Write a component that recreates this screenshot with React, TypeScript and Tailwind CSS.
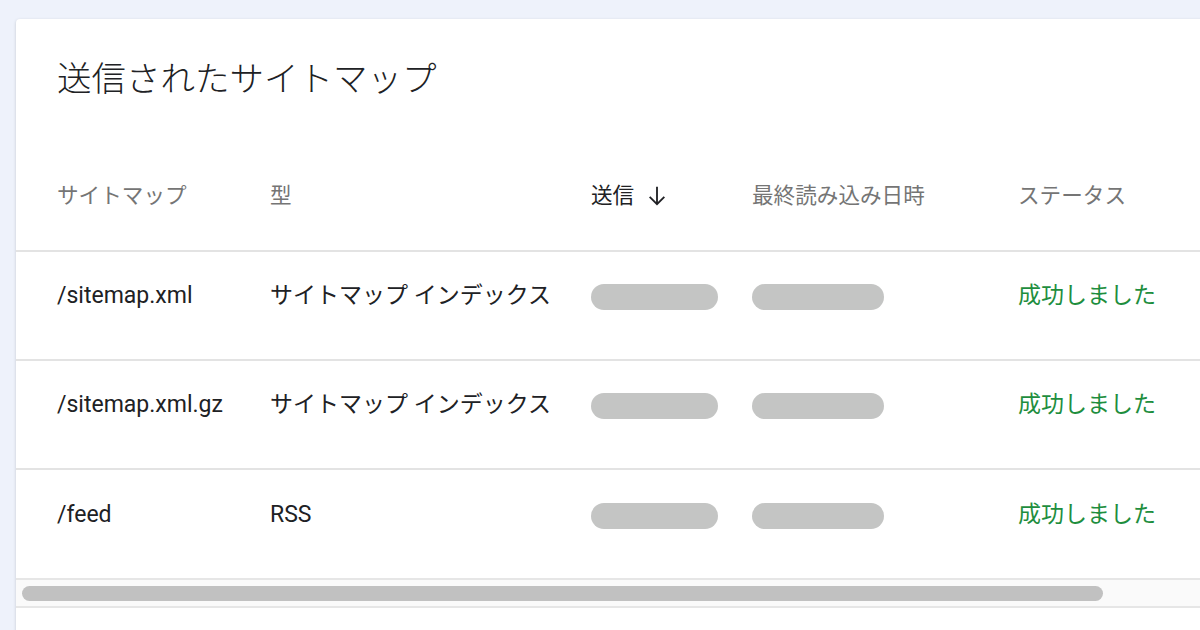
import React from 'react';

const rows = [
  { path: '/sitemap.xml', type: 'サイトマップ インデックス' },
  { path: '/sitemap.xml.gz', type: 'サイトマップ インデックス' },
  { path: '/feed', type: 'RSS' },
];

const font = { fontFamily: 'Roboto, "Noto Sans CJK JP", sans-serif' };

const App: React.FC = () => {
  return (
    <div className="h-[630px] w-[1200px] overflow-hidden bg-[#eef2fb] pt-[19px] pl-[16px]" style={font}>
      <div className="w-[1260px] h-[700px] bg-white rounded-tl-[4px] shadow-[0_1px_3px_rgba(60,64,67,0.25)]">
        <h1 className="pl-[41px] pt-[38px] text-[34.5px] leading-[44px] text-[#202124] font-light">
          送信されたサイトマップ
        </h1>

        <div className="mt-[52px] flex items-center h-[99px] pb-[10px] border-b-2 border-[#e3e3e3] text-[21.6px] text-[#757575]">
          <div className="pl-[41px] w-[254px]">サイトマップ</div>
          <div className="w-[321px]">型</div>
          <div className="w-[161px] flex items-center gap-[12px] text-[#202124]">
            <span>送信</span>
            <svg width="22" height="22" viewBox="0 0 24 24" fill="none" stroke="#202124" strokeWidth="2">
              <path d="M12 2v19M4 13l8 8 8-8" />
            </svg>
          </div>
          <div className="w-[266px]">最終読み込み日時</div>
          <div>ステータス</div>
        </div>

        {rows.map((r, i) => (
          <div
            key={r.path}
            className={`flex items-center h-[109px] pb-[18px] text-[23px] text-[#202124] ${i < rows.length - 1 ? 'border-b-2 border-[#e3e3e3]' : ''}`}
          >
            <div className="pl-[41px] w-[254px]">{r.path}</div>
            <div className="w-[321px]">{r.type}</div>
            <div className="w-[161px]">
              <div className="w-[127px] h-[26px] rounded-full bg-[#c4c5c4]" />
            </div>
            <div className="w-[266px]">
              <div className="w-[132px] h-[26px] rounded-full bg-[#c4c5c4]" />
            </div>
            <div className="text-[#1e8e3e]">成功しました</div>
          </div>
        ))}

        <div className="-mt-[1px] border-t-2 border-b-2 border-[#e6e6e6] bg-[#fafafa] h-[30px] flex items-center pl-[6px]">
          <div className="w-[1081px] h-[15px] rounded-full bg-[#c1c1c1]" />
        </div>
      </div>
    </div>
  );
};

export default App;
